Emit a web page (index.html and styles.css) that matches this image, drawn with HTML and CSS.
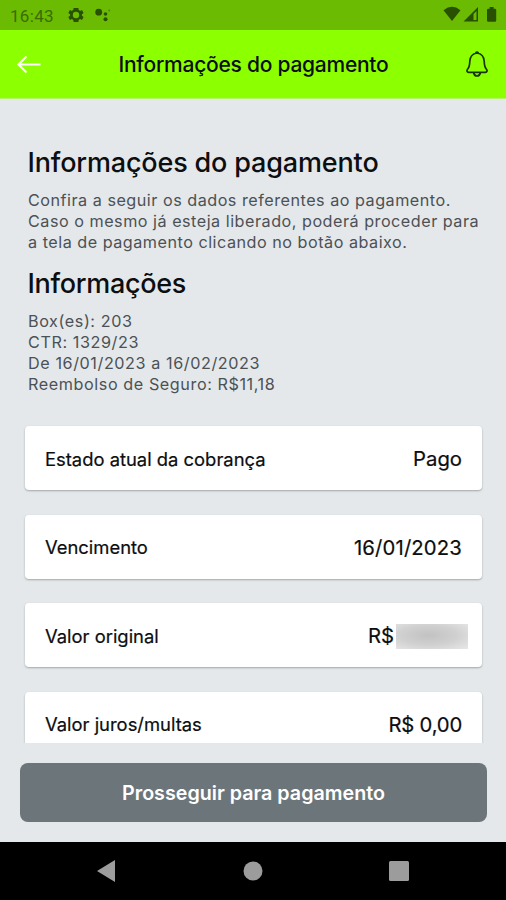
FILE: index.html
```html
<!DOCTYPE html>
<html lang="pt-BR">
<head>
<meta charset="utf-8">
<meta name="viewport" content="width=device-width, initial-scale=1">
<title>Informações do pagamento</title>
<link rel="stylesheet" href="styles.css">
</head>
<body>
<div class="screen">
  <div class="status">
    <span class="clock">16:43</span>
    <svg class="gear" width="16" height="16" viewBox="2 2 20 20"><path fill="currentColor" fill-rule="evenodd" d="M19.4 13a7.500 7.500 0 0 0 0-2l2.100-1.600-2-3.500-2.500 1a7.300 7.300 0 0 0-1.700-1L15 3.200H9l-.4 2.700a7.300 7.300 0 0 0-1.700 1l-2.500-1-2 3.500L4.600 11a7.500 7.500 0 0 0 0 2l-2.200 1.600 2 3.500 2.500-1a7.300 7.300 0 0 0 1.700 1l.4 2.700h6l.3-2.700a7.300 7.300 0 0 0 1.700-1l2.500 1 2-3.500zM12 16a4 4 0 1 1 0-8 4 4 0 0 1 0 8z"/></svg>
    <svg class="dots" width="16" height="14" viewBox="0 0 16 14"><g fill="currentColor"><circle cx="3.700" cy="4.200" r="3.400"/><circle cx="10.500" cy="6" r="1.800"/><circle cx="10.500" cy="11.200" r="2"/><circle cx="14.200" cy="2.500" r=".9" opacity=".5"/></g></svg>
    <svg class="signals" width="56" height="18" viewBox="0 0 56 18"><g fill="currentColor"><path d="M1.500 4.300Q10-2.600 18.500 4.300L10 15z"/><path fill-rule="evenodd" d="M21.500 15.500 36 1v14.500zM31.500 8v6h3V5z"/><path d="M45 4q0-1.200 1.200-1.200h1.400V1h4v1.800H53q1.200 0 1.200 1.200v10.600q0 1.200-1.200 1.200h-6.800q-1.200 0-1.200-1.200z"/></g></svg>
  </div>
  <header class="appbar">
    <svg width="26" height="22" viewBox="0 0 26 22"><path d="M24.500 11.500H3M10.500 3.500l-8 8 8 8" fill="none" stroke="#fff" stroke-width="2.200"/></svg>
    <div class="title">Informações do pagamento</div>
    <svg width="24" height="28" viewBox="0 0 24 28"><path d="M12 3c-4.400.7-7 3.800-7.200 8.300-.1 4-.5 6.200-2.400 8.200-.9 1.300-.4 2.700 1.200 2.800h16.800c1.600-.1 2.100-1.500 1.200-2.800-1.900-2-2.300-4.200-2.400-8.200C19 6.800 16.400 3.700 12 3zM8.500 22.500c.5 2.300 1.800 3.500 3.500 3.500s3-1.200 3.500-3.500M10.500 3Q12 1.300 13.500 3" fill="none" stroke="#173500" stroke-width="1.700" stroke-linejoin="round"/></svg>
  </header>
  <main class="content">
    <section class="intro">
      <h1>Informações do pagamento</h1>
      <p>Confira a seguir os dados referentes ao pagamento.<br>Caso o mesmo já esteja liberado, poderá proceder para<br>a tela de pagamento clicando no botão abaixo.</p>
      <h1 class="second">Informações</h1>
      <p class="details">Box(es): 203<br>CTR: 1329/23<br>De 16/01/2023 a 16/02/2023<br>Reembolso de Seguro: R$11,18</p>
    </section>
    <div class="cards">
      <div class="card"><span>Estado atual da cobrança</span><strong>Pago</strong></div>
      <div class="card"><span>Vencimento</span><strong class="date">16/01/2023</strong></div>
      <div class="card"><span>Valor original</span><strong class="hidden-value">R$<i class="mask"></i></strong></div>
      <div class="card"><span>Valor juros/multas</span><strong class="amount">R$ 0,00</strong></div>
    </div>
  </main>
  <footer class="action"><button>Prosseguir para pagamento</button></footer>
  <nav class="system">
    <svg width="18" height="22" viewBox="0 0 18 22"><path d="M0 11 18 0v22z" fill="#9c9c9c"/></svg>
    <svg class="home" width="20" height="20" viewBox="0 0 20 20"><circle cx="10" cy="10" r="9.500" fill="#9c9c9c"/></svg>
    <svg width="20" height="20" viewBox="0 0 20 20"><rect width="20" height="20" rx="1.500" fill="#9c9c9c"/></svg>
  </nav>
</div>
</body>
</html>
```
FILE: styles.css
```css
* { box-sizing: border-box; }
body { margin: 0; font-family: Inter, sans-serif; color: #0c0e10; }
svg { display: block; flex: none; }
.screen { width: 506px; height: 900px; background: #e4e8eb; display: flex; flex-direction: column; overflow: hidden; }
.status { height: 30px; flex: none; background: #6abb02; color: #285000; display: flex; align-items: center; padding: 0 8px 0 10px; }
.clock { font: 400 17px/30px Roboto, sans-serif; width: 58px; letter-spacing: .3px; padding-top: 1px; color: #3a6d00; }
.dots { margin-left: 11px; }
.signals { margin-left: auto; }
.appbar { height: 69px; flex: none; background: #8cff00; display: flex; align-items: center; justify-content: space-between; padding: 0 17px 0 16px; border-bottom: 1px solid #b6f36a; }
.appbar .title { font-size: 21px; font-weight: 500; letter-spacing: -.25px; white-space: nowrap; }
.content { height: 644px; flex: none; overflow: hidden; padding: 46px 24px 0 25px; }
.intro { padding: 1px 0 0 3px; height: 281px; white-space: nowrap; }
h1 { margin: 0 0 0 -.5px; font-size: 27px; font-weight: 500; line-height: 34px; letter-spacing: -.16px; }
p { margin: 10px 0 0; font-size: 16.200px; font-weight: 400; line-height: 21px; letter-spacing: .5px; color: #4c5155; }
h1.second { margin-top: 14px; letter-spacing: -.3px; }
.details { letter-spacing: .57px; }
.cards { display: flex; flex-direction: column; gap: 24.600px; }
.card { height: 64px; flex: none; background: #fff; border-radius: 4px; box-shadow: 0 1px 2px rgba(60,70,75,.4); display: flex; align-items: center; justify-content: space-between; padding: 1px 20px 0; }
.card span { font-size: 18.400px; font-weight: 400; -webkit-text-stroke: .2px; }
.card strong { font-size: 20.300px; font-weight: 400; -webkit-text-stroke: .2px; }
.card .date { letter-spacing: .15px; }
.card .amount { letter-spacing: -.2px; }
.card .hidden-value { display: flex; align-items: center; margin-right: -6px; }
.mask { width: 72px; height: 25px; margin: 1px 0 0 2px; background: radial-gradient(ellipse at 45% 45%, #c2c2c2, #d0d0d0 50%, #e8e8e8); }
.action { height: 99px; flex: none; padding: 20px 19px 0 20px; }
button { width: 100%; height: 59px; border: 0; border-radius: 8px; background: #6c757a; color: #fff; font: 600 19.700px/57px Inter, sans-serif; padding: 2px 0 0; display: block; }
.system { flex: 1; background: #000; display: flex; justify-content: space-between; align-items: center; padding: 0 97px; }
.home { margin-left: 2px; }
```
